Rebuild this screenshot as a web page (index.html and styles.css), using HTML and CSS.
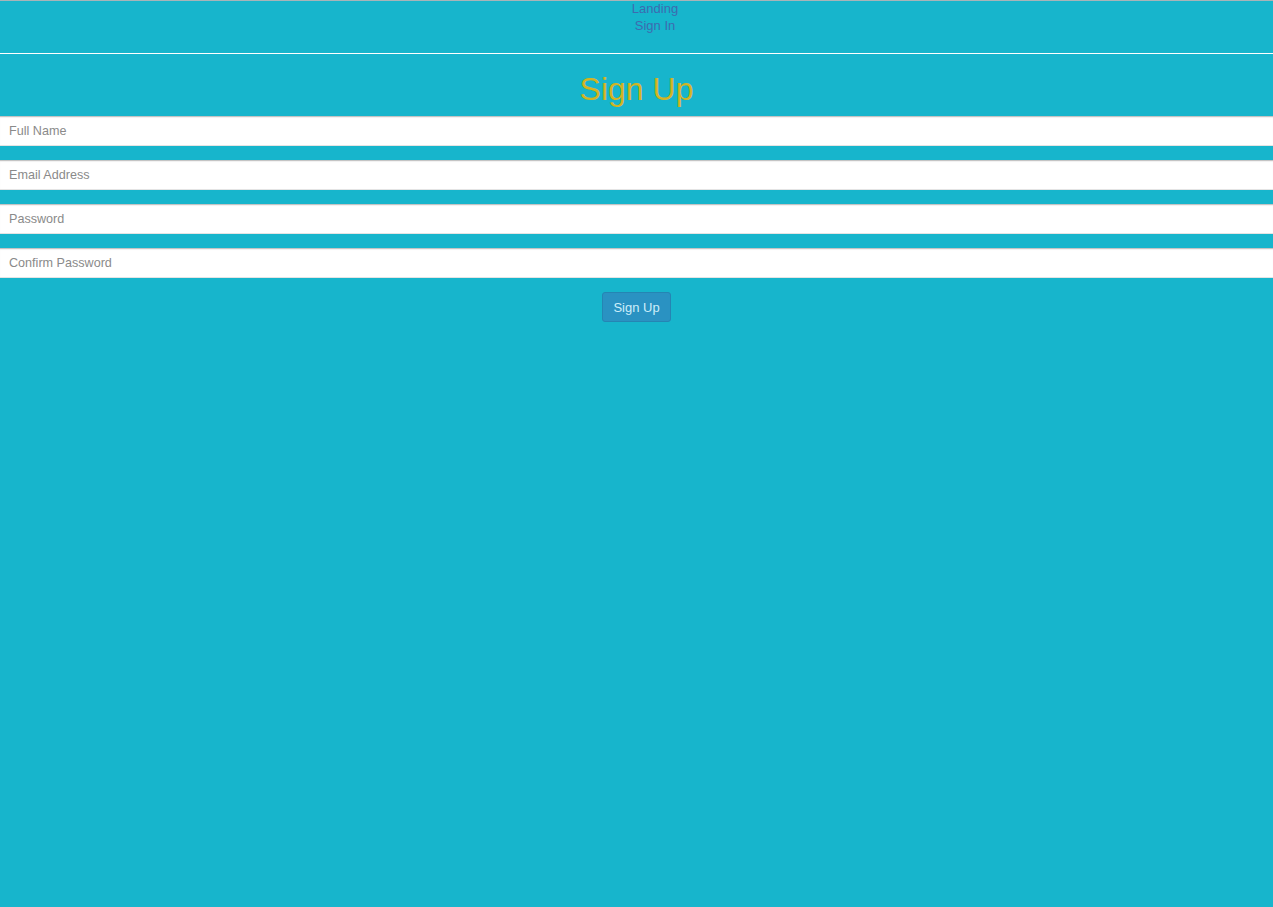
FILE: index.html
```html
<!DOCTYPE html>
<html>
<head>
<meta charset="utf-8">
<title>Sign Up</title>
<link rel="stylesheet" href="styles.css">
</head>
<body>
<header class="topbar">
  <ul class="nav">
    <li><a href="#">Landing</a></li>
    <li><a href="#">Sign In</a></li>
  </ul>
</header>
<main class="signup">
  <h1 class="title">Sign Up</h1>
  <form class="form">
    <input class="field" type="text" placeholder="Full Name">
    <input class="field" type="email" placeholder="Email Address">
    <input class="field" type="password" placeholder="Password">
    <input class="field" type="password" placeholder="Confirm Password">
    <div class="actions">
      <button class="btn" type="button">Sign Up</button>
    </div>
  </form>
</main>
</body>
</html>
```
FILE: styles.css
```css
html, body {
  margin: 0;
  padding: 0;
}
body {
  background: #17b5cc;
  font-family: "Liberation Sans", Arial, sans-serif;
  border-top: 1px solid #a9b4b8;
  min-height: 906px;
}
.topbar {
  display: flow-root;
  box-sizing: border-box;
  height: 53px;
  border-bottom: 1px solid #ffffff;
}
.nav {
  list-style: none;
  margin: -1px 0 0 0;
  padding: 0 0 0 37px;
  text-align: center;
  font-size: 13px;
  line-height: 17px;
}
.nav a {
  color: #3d6bb0;
  text-decoration: none;
}
.title {
  margin: 0;
  height: 62px;
  line-height: 70px;
  text-align: center;
  font-size: 32px;
  font-weight: normal;
  color: #d2b423;
}
.form {
  display: flex;
  flex-direction: column;
  gap: 14px;
}
.field {
  display: block;
  box-sizing: border-box;
  width: 100%;
  height: 30px;
  margin: 0;
  padding: 0 8px 1px 9px;
  border: none;
  border-top: 1px solid #c4c4c4;
  border-bottom: 1px solid #e4e4e4;
  box-shadow: inset 0 1px 1px rgba(0,0,0,0.06);
  background: #ffffff;
  font-family: "Liberation Sans", Arial, sans-serif;
  font-size: 12.6px;
  color: #555;
  outline: none;
}
.field::placeholder {
  color: #8a8a8a;
}
.actions {
  display: flex;
  justify-content: center;
}
.btn {
  height: 30px;
  padding: 0 10px;
  border: 1px solid #2585b3;
  border-radius: 3px;
  background: #2a92c2;
  color: #cdeefa;
  font-family: "Liberation Sans", Arial, sans-serif;
  font-size: 13px;
  cursor: pointer;
}
```
